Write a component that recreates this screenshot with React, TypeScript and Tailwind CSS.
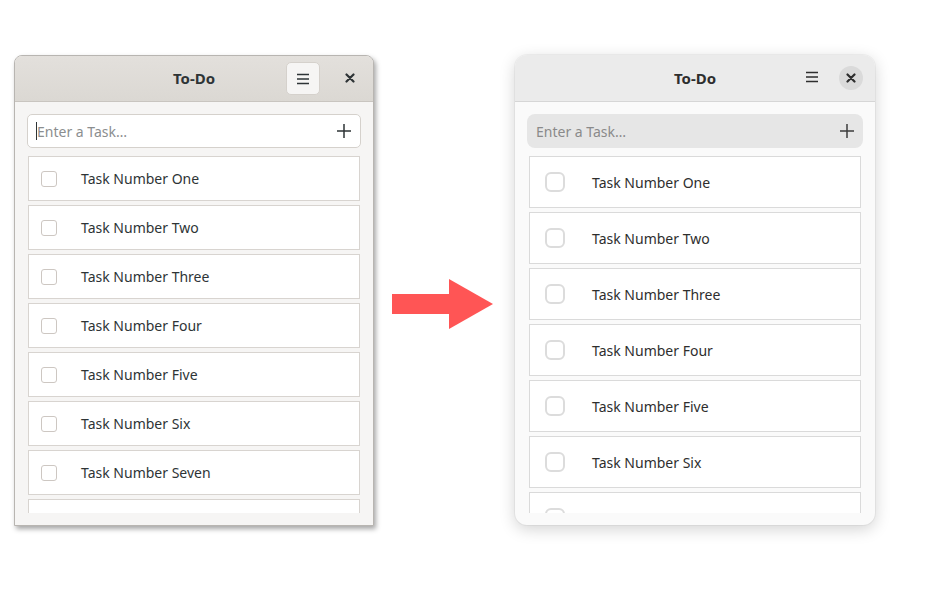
import React from 'react';

const tasks = ['Task Number One', 'Task Number Two', 'Task Number Three', 'Task Number Four', 'Task Number Five', 'Task Number Six', 'Task Number Seven', 'Task Number Eight'];

const font = { fontFamily: '"Noto Sans", "Open Sans", sans-serif' };

const MenuIcon = ({ className }: { className?: string }) => (
  <svg width="16" height="16" viewBox="0 0 16 16" className={className}>
    <path d="M2 3.5h12M2 8h12M2 12.5h12" stroke="currentColor" strokeWidth="1.7" />
  </svg>
);

const CloseIcon = () => (
  <svg width="10" height="10" viewBox="0 0 10 10">
    <path d="M1.5 1.5l7 7M8.5 1.5l-7 7" stroke="currentColor" strokeWidth="2.2" strokeLinecap="round" />
  </svg>
);

const PlusIcon = () => (
  <svg width="16" height="16" viewBox="0 0 16 16">
    <path d="M8 1v14M1 8h14" stroke="currentColor" strokeWidth="1.5" />
  </svg>
);

// old-style Adwaita window
const OldWindow = () => (
  <div className="w-[360px] h-[471px] flex flex-col rounded-t-[8px] border border-[#b8b5b1] bg-[#f6f5f4] shadow-[2px_3px_5px_rgba(0,0,0,0.35)] overflow-hidden">
    <div className="relative h-[46px] shrink-0 flex items-center justify-center bg-gradient-to-b from-[#e3e0dc] to-[#dbd8d3] border-b border-[#c9c5c0]">
      <span className="text-[15px] font-bold text-[#2e3436]">To-Do</span>
      <div className="absolute right-[53px] top-[6px] w-[34px] h-[33px] rounded-[5px] bg-[#f6f5f4] border border-[#d5d1cc] flex items-center justify-center text-[#2e3436]">
        <MenuIcon />
      </div>
      <div className="absolute right-[18px] top-[17px] text-[#2e3436]">
        <CloseIcon />
      </div>
    </div>
    <div className="flex-1 min-h-0 flex flex-col px-[12px] pt-[12px] pb-[12px]">
      <div className="h-[34px] shrink-0 flex items-center rounded-[5px] border border-[#d5d1cc] bg-white pl-[8px] pr-[8px]">
        <span className="w-px h-[18px] bg-[#2e3436]" />
        <span className="flex-1 text-[14px] text-[#8b8e8f]">Enter a Task…</span>
        <span className="text-[#2e3436]"><PlusIcon /></span>
      </div>
      <div className="flex-1 min-h-0 overflow-hidden mt-[8px] px-px flex flex-col gap-[4px]">
        {tasks.map(t => (
          <div key={t} className="h-[45px] shrink-0 flex items-center border border-[#d8d4d0] bg-white pl-[12px]">
            <span className="w-[16px] h-[16px] rounded-[3px] border border-[#cdc7c2] bg-white" />
            <span className="ml-[24px] text-[14px] text-[#2e3436]">{t}</span>
          </div>
        ))}
      </div>
    </div>
  </div>
);

// libadwaita window
const NewWindow = () => (
  <div className="w-[360px] h-[470px] flex flex-col rounded-[12px] bg-[#fafafa] shadow-[0_4px_16px_rgba(0,0,0,0.18),0_0_0_1px_rgba(0,0,0,0.04)] overflow-hidden">
    <div className="relative h-[47px] shrink-0 flex items-center justify-center bg-[#ebebeb] border-b border-[#d6d6d6]">
      <span className="text-[15px] font-bold text-[#2e2e2e]">To-Do</span>
      <div className="absolute right-[55px] top-[14px] text-[#2e2e2e]">
        <MenuIcon />
      </div>
      <div className="absolute right-[12px] top-[11px] w-[24px] h-[24px] rounded-full bg-[#dadada] flex items-center justify-center text-[#2e2e2e]">
        <CloseIcon />
      </div>
    </div>
    <div className="flex-1 min-h-0 flex flex-col px-[12px] pt-[12px] pb-[12px]">
      <div className="h-[34px] shrink-0 flex items-center rounded-[8px] bg-[#e6e6e6] pl-[9px] pr-[8px]">
        <span className="flex-1 text-[14px] text-[#8a8a8a]">Enter a Task…</span>
        <span className="text-[#3d3d3d]"><PlusIcon /></span>
      </div>
      <div className="flex-1 min-h-0 overflow-hidden mt-[8px] px-[2px] flex flex-col gap-[4px]">
        {tasks.map(t => (
          <div key={t} className="h-[52px] shrink-0 flex items-center border border-[#dadada] bg-white pl-[15px]">
            <span className="w-[20px] h-[20px] rounded-[6px] border-2 border-[#dcdcdc] bg-white" />
            <span className="ml-[27px] text-[14px] text-[#2e2e2e]">{t}</span>
          </div>
        ))}
      </div>
    </div>
  </div>
);

const App = () => {
  return (
    <div className="w-[936px] h-[593px] bg-white flex items-start pl-[14px] pt-[55px]" style={font}>
      <OldWindow />
      <div className="ml-[18px] mt-[224px] flex items-center">
        <div className="w-[58px] h-[20px] bg-[#ff5555]" />
        <svg width="44" height="50" viewBox="0 0 44 50" className="-ml-px">
          <path d="M0 0L44 25L0 50Z" fill="#ff5555" />
        </svg>
      </div>
      <div className="ml-[22px]">
        <NewWindow />
      </div>
    </div>
  );
};

export default App;
